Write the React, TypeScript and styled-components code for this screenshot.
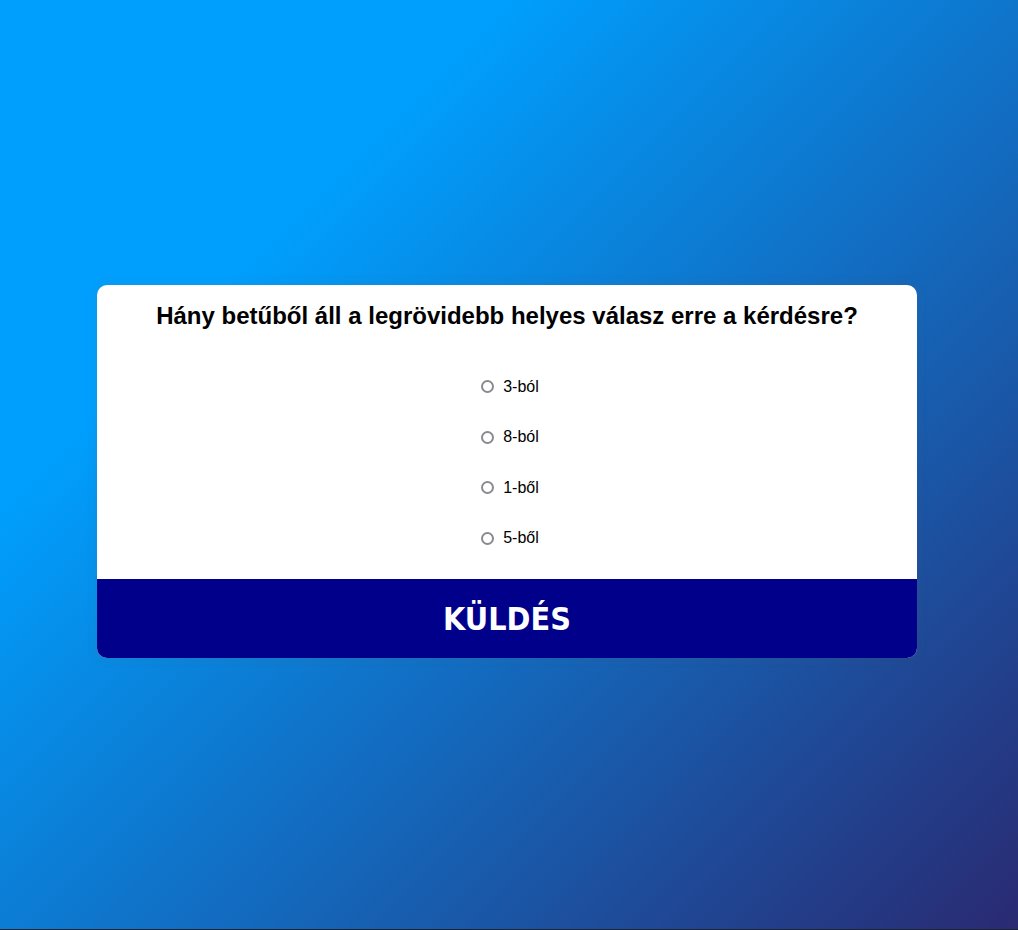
import React from "react";
import styled, { createGlobalStyle } from "styled-components";

const Global = createGlobalStyle`
  html { background: #1c2530; }
  body { margin: 0; font-family: "Liberation Sans", Arial, sans-serif; }
`;

const Page = styled.div`
  height: 929px;
  box-sizing: border-box;
  padding-right: 4px;
  background: linear-gradient(315deg, #2a2a72 0%, #009ffd 74%);
  display: flex;
  align-items: center;
  justify-content: center;
`;

const Card = styled.div`
  width: 820px;
  background: #fff;
  border-radius: 10px;
  box-shadow: 0 0 10px 2px rgba(100, 100, 100, 0.1);
  overflow: hidden;
  margin-top: 14px;
`;

const Body = styled.div`
  padding: 17px 20px 31px;
`;

const Title = styled.h2`
  margin: 0 0 47px;
  text-align: center;
  font-size: 24px;
  font-weight: bold;
  color: #000;
  line-height: 28px;
`;

const List = styled.ul`
  list-style: none;
  margin: 0;
  padding: 0;
  display: flex;
  flex-direction: column;
  align-items: center;
  gap: 31.67px;
`;

const Item = styled.li`
  display: flex;
  align-items: center;
  height: 19px;
  font-size: 16px;
  color: #000;
  padding-left: 6px;
`;

const Radio = styled.input`
  appearance: none;
  box-sizing: border-box;
  width: 13px;
  height: 13px;
  margin: 0 9px 0 0;
  border: 2px solid #8a8a8f;
  border-radius: 50%;
  background: #fff;
  &:checked {
    border: 4px solid #0075ff;
  }
`;

const Send = styled.button`
  display: block;
  width: 100%;
  height: 79px;
  padding-top: 2px;
  border: none;
  background: #00008b;
  color: #fff;
  font-family: "DejaVu Sans Condensed", "DejaVu Sans", Verdana, sans-serif;
  font-stretch: condensed;
  font-weight: bold;
  font-size: 32px;
  cursor: pointer;
`;

const options = ["3-ból", "8-ból", "1-ből", "5-ből"];

export default function App() {
  return (
    <>
      <Global />
      <Page>
        <Card>
          <Body>
            <Title>Hány betűből áll a legrövidebb helyes válasz erre a kérdésre?</Title>
            <List>
              {options.map((o, i) => (
                <Item key={o}>
                  <Radio type="radio" name="answer" id={`a${i}`} />
                  <label htmlFor={`a${i}`}>{o}</label>
                </Item>
              ))}
            </List>
          </Body>
          <Send>KÜLDÉS</Send>
        </Card>
      </Page>
    </>
  );
}
